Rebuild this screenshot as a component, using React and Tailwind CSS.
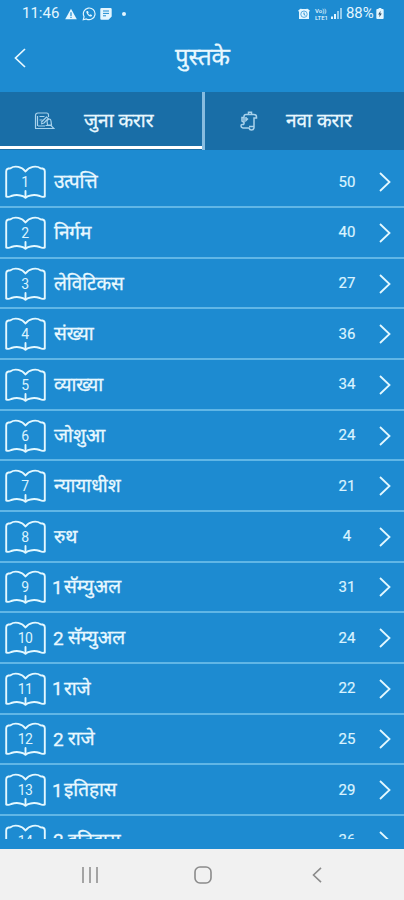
const books = [
  { id: 1, name: "उत्पत्ति", chapters: 50 },
  { id: 2, name: "निर्गम", chapters: 40 },
  { id: 3, name: "लेविटिकस", chapters: 27 },
  { id: 4, name: "संख्या", chapters: 36 },
  { id: 5, name: "व्याख्या", chapters: 34 },
  { id: 6, name: "जोशुआ", chapters: 24 },
  { id: 7, name: "न्यायाधीश", chapters: 21 },
  { id: 8, name: "रुथ", chapters: 4 },
  { id: 9, part: 1, name: "सॅम्युअल", chapters: 31 },
  { id: 10, part: 2, name: "सॅम्युअल", chapters: 24 },
  { id: 11, part: 1, name: "राजे", chapters: 22 },
  { id: 12, part: 2, name: "राजे", chapters: 25 },
  { id: 13, part: 1, name: "इतिहास", chapters: 29 },
  { id: 14, part: 2, name: "इतिहास", chapters: 36 },
];

const StatusBar = () => (
  <div className="flex h-[27px] items-center pl-[22px] pr-[20px] text-[#e3f6ff]">
    <span className="w-[37px] whitespace-nowrap font-[Roboto] text-[15px] leading-none">11:46</span>
    {/* Notifications */}
    <svg className="ml-[6px] h-3 w-3" viewBox="0 0 12 12" fill="currentColor">
      <path d="M6 .8 11.8 11.2H.2Z" />
      <path d="M6 4.3v3.6M6 8.8v1.2" stroke="#1d8bd1" strokeWidth="1.2" />
    </svg>
    <svg className="ml-[5px] h-[14px] w-[14px]" viewBox="0 0 24 24" fill="none" stroke="currentColor" strokeWidth="2">
      <path d="M2.2 21.8 3.6 16.6A10 10 0 1 1 7.4 20.4Z" />
      <path d="M8.2 6.8c-3 2.4 3.6 10.6 8 9.6l1.3-2.4-3-1.5-1.2 1.3c-1.2-.5-2.4-1.7-2.9-3l1-1.3-1.3-2.8Z" fill="currentColor" stroke="none" />
    </svg>
    <svg className="ml-[4px] h-3 w-3" viewBox="0 0 12 12">
      <path d="M1.5 0h9A1.2 1.2 0 0 1 11.7 1.2v7.3L8.5 11.7h-7A1.2 1.2 0 0 1 .3 10.5V1.2A1.2 1.2 0 0 1 1.5 0Z" fill="currentColor" />
      <path d="M3 3h6M3 5.4h6M3 7.8h3" stroke="#1d8bd1" strokeWidth="1" />
    </svg>
    <span className="ml-[10px] h-1 w-1 rounded-full bg-[#e3f6ff]" />

    {/* Alarm, network, battery */}
    <svg className="ml-auto h-3 w-3" viewBox="0 0 12 12">
      <path d="M0 2.8 3 .4l1 1-3 2.4ZM12 2.8 9 .4l-1 1 3 2.4Z" fill="currentColor" />
      <path d="M2 1h8l1 2v8H1V3Z" fill="currentColor" />
      <circle cx="6" cy="6.2" r="3.2" fill="none" stroke="#1d8bd1" strokeWidth=".7" />
      <path d="M6 4.500v2l1.300.8" fill="none" stroke="#1d8bd1" strokeWidth="1" />
    </svg>
    <span className="ml-[5px] flex w-[14px] flex-col font-[Roboto] text-[6px] font-medium">
      <span className="whitespace-nowrap leading-[7px]">Vo))</span>
      <span className="whitespace-nowrap leading-[7px]">LTE1</span>
    </span>
    <svg className="ml-[2px] h-[11px] w-[11px]" viewBox="0 0 11 11" fill="currentColor">
      <path d="M0 8.500h2V11H0ZM3 6h2v5H3Z" />
      <path d="M6 3h2v8H6ZM9 0h2v11H9Z" opacity=".6" />
    </svg>
    <span className="ml-[4px] w-[28px] whitespace-nowrap font-[Roboto] text-[15px] leading-none tracking-[-0.1px]">88%</span>
    <svg className="ml-[2px] h-[11px] w-2" viewBox="0 0 8 12">
      <path d="M2.500 0h3v1.200H7A1 1 0 0 1 8 2.200V11a1 1 0 0 1-1 1H1a1 1 0 0 1-1-1V2.200a1 1 0 0 1 1-1h1.500Z" fill="currentColor" />
      <path d="M4.600 3 2 7h1.600l-.4 3L6 6H4.300Z" fill="#31516b" />
    </svg>
  </div>
);

const OldTestamentIcon = () => (
  <svg className="h-[18px] w-[21px]" viewBox="0 0 21 18" fill="none" stroke="#a8d2ec" strokeWidth="1.2">
    <path d="M1.500 16V3.500Q1.500 1 4 1h8.500q2 0 2 2v2M3.500 4v10M1 16.500h12M5.500 4.500h5M5.500 8h3" />
    <path d="m7 10.500 5.500-5.500 1.800 1.500L10 11l-3 .8" />
    <path d="M13 8.500q3.500-3 4 .5l.5 4h-4ZM11.500 13.500h5.500l3 3h-9M4 14h7" />
  </svg>
);

const NewTestamentIcon = () => (
  <svg className="h-[20px] w-[18px]" viewBox="0 0 18 20" fill="none" stroke="#a8d2ec" strokeWidth="1.5">
    <path d="M4 13.500V5.500Q4 3.500 6 3.500h8q2.500 0 2.500 2.500v1H14v9M4 13.500H2q-1 0-1 1.500t2 2h6q.500 2 2.500 2t2.500-2v-1.500H9" />
    <path d="M8.500 3.500V1.200h3v2.300M4 6.500H2V10l2 1.500M6 6v3.500L8 7.500" />
  </svg>
);

const BookIcon = ({ number }) => (
  <span className="relative flex h-[34px] w-[42px] items-center justify-center">
    <svg className="absolute inset-0 h-full w-full" viewBox="0 0 42 34" fill="none" stroke="#e3f8ff" strokeWidth="1.9" strokeLinejoin="round" strokeLinecap="round">
      <path d="M20.500 6.500C17 1.500 9.500.300 5.500 3.300Q1.200 3.300 1.200 6.500V31.500q2.500 1 5-.5 5-1.600 9.300-.5 3.500.500 5 2.300 1.500-1.800 5-2.300 4.300-1.100 9.300.5 2.500 1.500 5 .5V6.500q0-3.200-4.300-3.200C31.500.300 24 1.500 20.500 6.500Z" />
      <path d="M20.500 26v6" />
    </svg>
    <span className="relative -left-px font-[Roboto] text-[14px] leading-none tracking-[-0.6px] text-[#d9f3ff]">{number}</span>
  </span>
);

const BookRow = ({ book }) => (
  <div className="flex h-[50.65px] shrink-0 items-center border-b-2 border-[#60b6e6] pl-[5px] pr-[13px] pt-px">
    <BookIcon number={book.id} />
    <span className="ml-[7px] flex items-center whitespace-nowrap pt-[3px] text-[19px] leading-none tracking-[-0.1px] [-webkit-text-stroke:0.3px_#e8f8ff]">
      {book.part && (
        <span
          className={
            book.part === 1
              ? "-ml-[2px] w-[12px] pb-[3px] font-[Roboto] text-[19px] tracking-normal"
              : "-ml-px w-[15px] pb-[3px] font-[Roboto] text-[19px] tracking-normal"
          }
        >
          {book.part}
        </span>
      )}
      <span>{book.name}</span>
    </span>
    <span className="ml-auto w-[30px] text-center font-[Roboto] text-[15px] leading-none text-[#daf3ff] [-webkit-text-stroke:0.2px_#daf3ff]">{book.chapters}</span>
    <svg className="ml-[17px] h-5 w-[12px]" viewBox="0 0 12 20" fill="none" stroke="#e3f8ff" strokeWidth="1.8">
      <path d="m1 1 9.500 9L1 19" />
    </svg>
  </div>
);

export default function App() {
  return (
    <div className="flex h-[900px] w-full flex-col overflow-hidden bg-[#1d8bd1] font-['Noto_Sans_Devanagari','Noto_Sans',sans-serif] text-[#e8f8ff]">
      <StatusBar />

      {/* Header */}
      <div className="flex h-[65px] items-center px-[14px] pb-[4px]">
        <svg className="h-5 w-[12px]" viewBox="0 0 12 20" fill="none" stroke="currentColor" strokeWidth="1.7">
          <path d="M11 1 1.500 10l9.500 9" />
        </svg>
        <h1 className="flex-1 pr-[11px] pt-[3px] text-center text-[24px] leading-none [-webkit-text-stroke:0.3px_#e8f8ff]">पुस्तके</h1>
      </div>

      {/* Tabs */}
      <div className="flex h-[58px] shrink-0 bg-[#196ea7] [-webkit-text-stroke:0.3px_#e8f8ff]">
        <div className="flex h-[57px] w-[202px] items-center border-b-[3px] border-white pl-[34px] pt-[3px]">
          <OldTestamentIcon />
          <span className="ml-[29px] whitespace-nowrap pt-[3px] text-[19px] leading-none">जुना करार</span>
        </div>
        <div className="flex flex-1 items-center border-l-[3px] border-[#87bce0] pl-[35px]">
          <NewTestamentIcon />
          <span className="ml-[28px] whitespace-nowrap pt-[3px] text-[19px] leading-none">नवा करार</span>
        </div>
      </div>

      {/* Book list */}
      <div className="mb-[10px] flex min-h-0 flex-1 flex-col overflow-hidden pt-[7.5px]">
        {books.map((book) => (
          <BookRow key={book.id} book={book} />
        ))}
      </div>

      {/* Navigation bar */}
      <div className="flex h-[51px] shrink-0 items-center justify-between bg-[#f1f1f1] pl-[82px] pr-[82px] text-[#8b8b8b]">
        <svg className="h-4 w-4" viewBox="0 0 16 16" fill="none" stroke="currentColor" strokeWidth="1.5">
          <path d="M1 0v16M8 0v16M15 0v16" />
        </svg>
        <svg className="-ml-[4px] h-[18px] w-[18px]" viewBox="0 0 18 18" fill="none" stroke="currentColor" strokeWidth="1.6">
          <rect x="1" y="1" width="16" height="16" rx="5" />
        </svg>
        <svg className="h-4 w-[10px]" viewBox="0 0 10 16" fill="none" stroke="currentColor" strokeWidth="1.6">
          <path d="M9 .8 1.500 8 9 15.200" />
        </svg>
      </div>
    </div>
  );
}
